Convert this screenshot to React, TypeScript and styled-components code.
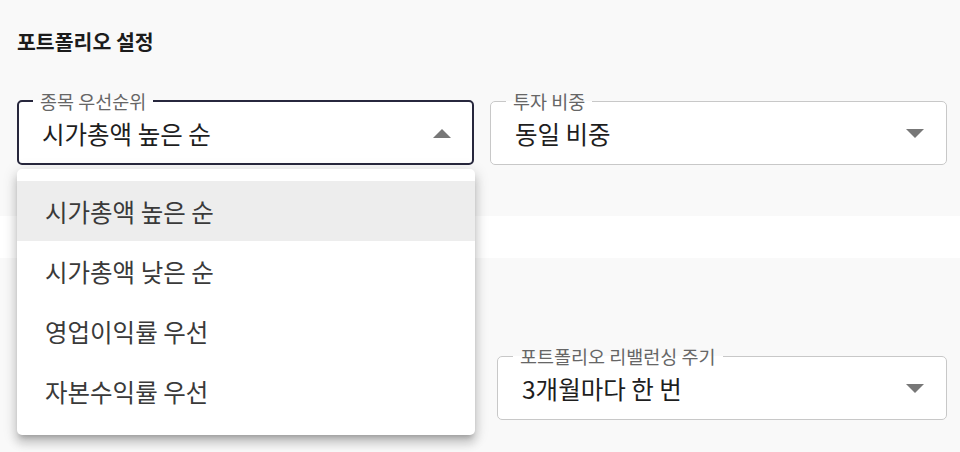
import styled, { createGlobalStyle } from 'styled-components';

const GlobalStyle = createGlobalStyle`
  *, *::before, *::after {
    box-sizing: border-box;
  }
  body {
    margin: 0;
    background: #ffffff;
    font-family: "Noto Sans CJK KR", "Noto Sans", sans-serif;
    color: #212121;
  }
`;

interface SelectProps {
  label: string;
  value: string;
  open?: boolean;
}

const priorityOptions = [
  '시가총액 높은 순',
  '시가총액 낮은 순',
  '영업이익률 우선',
  '자본수익률 우선',
];

function ArrowIcon({ up }: { up?: boolean }) {
  return (
    <Arrow viewBox="0 0 18 9">
      <path d={up ? 'M0 9L9 0L18 9Z' : 'M0 0L9 9L18 0Z'} />
    </Arrow>
  );
}

function Select({ label, value, open }: SelectProps) {
  return (
    <SelectWrap>
      <Field $focused={open}>
        <Legend>{label}</Legend>
        <ValueRow>
          <Value>{value}</Value>
          <ArrowIcon up={open} />
        </ValueRow>
      </Field>
      {open && (
        <Menu>
          {priorityOptions.map((opt) => (
            <MenuItem key={opt} $selected={opt === value}>
              {opt}
            </MenuItem>
          ))}
        </Menu>
      )}
    </SelectWrap>
  );
}

function App() {
  return (
    <>
      <GlobalStyle />
      <Page>
        <Section $top={26}>
          <Title>포트폴리오 설정</Title>
          <FieldGrid $gap={16}>
            <Select label="종목 우선순위" value="시가총액 높은 순" open />
            <Select label="투자 비중" value="동일 비중" />
          </FieldGrid>
        </Section>
        {/* the left column of this card sits under the open menu */}
        <Section $top={89}>
          <FieldGrid $gap={30}>
            <div />
            <Select label="포트폴리오 리밸런싱 주기" value="3개월마다 한 번" />
          </FieldGrid>
        </Section>
      </Page>
    </>
  );
}

const Page = styled.div`
  display: flex;
  flex-direction: column;
  gap: 42px;
  min-height: 100vh;
`;

const Section = styled.section<{ $top: number }>`
  background: #f9f9f9;
  padding: ${(p) => p.$top}px 13px 51px 17px;
`;

const Title = styled.h2`
  margin: 0 0 36px;
  font-size: 20.5px;
  line-height: 30px;
  font-weight: 700;
  color: #1c1c1c;
`;

const FieldGrid = styled.div<{ $gap: number }>`
  display: grid;
  grid-template-columns: 1fr 1fr;
  column-gap: ${(p) => p.$gap}px;
`;

const SelectWrap = styled.div`
  position: relative;
`;

const Field = styled.fieldset<{ $focused?: boolean }>`
  margin: 0;
  min-width: 0;
  height: 73px;
  padding: 0 ${(p) => (p.$focused ? 21 : 22)}px 7px ${(p) => (p.$focused ? 23 : 24)}px;
  border: ${(p) => (p.$focused ? '2px solid #27273d' : '1px solid #c8c8c8')};
  border-radius: 5px;
  background: #ffffff;
`;

const Legend = styled.legend`
  margin-left: -9px;
  padding: 0 7px;
  font-size: 18.5px;
  line-height: 18px;
  color: #666666;
  white-space: nowrap;
`;

const ValueRow = styled.div`
  display: flex;
  align-items: center;
  justify-content: space-between;
  height: 100%;
`;

const Value = styled.span`
  font-size: 24.5px;
  color: #1e1e1e;
  white-space: nowrap;
`;

const Arrow = styled.svg`
  width: 18px;
  height: 9px;
  fill: #777777;
  flex-shrink: 0;
`;

const Menu = styled.ul`
  position: absolute;
  top: 77px;
  left: 0;
  right: -1px;
  z-index: 10;
  margin: 0;
  padding: 12px 0 14px;
  list-style: none;
  background: #ffffff;
  border-radius: 5px;
  box-shadow: 0px 5px 5px -3px rgba(0, 0, 0, 0.2),
    0px 8px 10px 1px rgba(0, 0, 0, 0.14), 0px 3px 14px 2px rgba(0, 0, 0, 0.12);
`;

const MenuItem = styled.li<{ $selected?: boolean }>`
  display: flex;
  align-items: center;
  height: 60px;
  padding: 0 28px;
  font-size: 24.5px;
  color: #3a3a3a;
  background: ${(p) => (p.$selected ? '#ededed' : 'transparent')};
`;

export default App;
